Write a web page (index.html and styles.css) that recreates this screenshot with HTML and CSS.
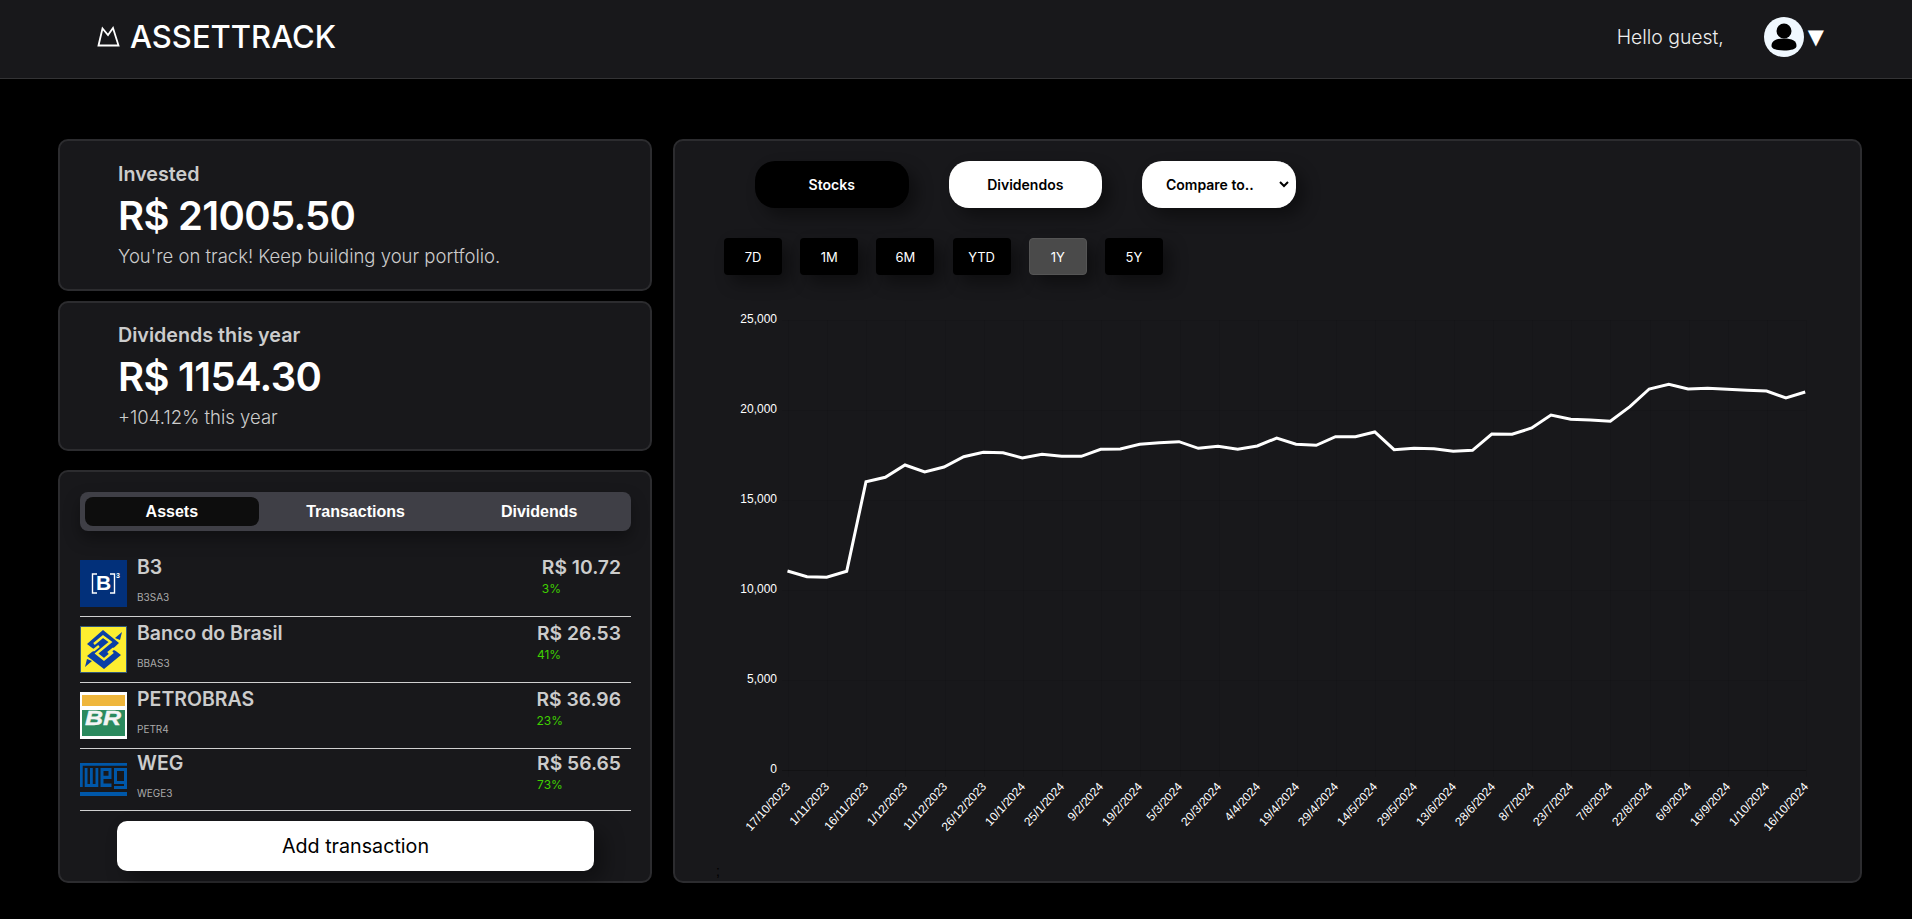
FILE: index.html
```html
<!DOCTYPE html>
<html lang="en">
<head>
<meta charset="utf-8">
<title>AssetTrack</title>
<link rel="stylesheet" href="styles.css">
</head>
<body>
<header class="topbar">
  <div class="brand">
    <svg class="brand-icon" width="23" height="21" viewBox="0 0 23 21"><path d="M1.5 19.5 L5.5 2.5 L11 9 L16 2 L21.5 19.5 Z" fill="none" stroke="#fff" stroke-width="1.8"/></svg>
    <span class="brand-name">ASSETTRACK</span>
  </div>
  <div class="user">
    <span class="hello">Hello guest,</span>
    <svg class="avatar" width="40" height="40" viewBox="0 0 40 40"><circle cx="20" cy="20" r="20" fill="#f0f8ff"/><circle cx="20" cy="14" r="7.5" fill="#000"/><path d="M7.5 29 C7.5 23.5 12 21.5 20 21.5 C28 21.5 32.5 23.5 32.5 29 C32.5 32 27 33.5 20 33.5 C13 33.5 7.5 32 7.5 29 Z" fill="#000"/></svg>
    <span class="caret">▼</span>
  </div>
</header>
<main class="layout">
  <div class="side">
    <section class="card stat stat-first">
      <h2 class="stat-label">Invested</h2>
      <div class="stat-value">R$ 21005.50</div>
      <p class="stat-note">You're on track! Keep building your portfolio.</p>
    </section>
    <section class="card stat stat-second">
      <h2 class="stat-label">Dividends this year</h2>
      <div class="stat-value">R$ 1154.30</div>
      <p class="stat-note">+104.12% this year</p>
    </section>
    <section class="card assets">
      <div class="tabs">
        <button class="tab tab-active">Assets</button>
        <button class="tab">Transactions</button>
        <button class="tab">Dividends</button>
      </div>
      <ul class="asset-list">
        <li class="asset">
          <svg class="logo" width="47" height="47" viewBox="0 0 47 47"><rect width="47" height="47" fill="#02307a"/><path d="M17 14 H12.5 V33 H17 M30 14 H34.5 V33 H30" fill="none" stroke="#fff" stroke-width="1.4"/><text x="23.5" y="30" class="logo-b3">B</text><text x="36" y="18" class="logo-b3-sup">3</text></svg>
          <div class="asset-info"><div class="asset-name">B3</div><div class="asset-ticker">B3SA3</div></div>
          <div class="asset-price"><div class="price">R$ 10.72</div><div class="pct">3%</div></div>
        </li>
        <li class="asset">
          <svg class="logo" width="47" height="47" viewBox="0 0 47 47"><rect x=".5" y=".5" width="46" height="46" fill="#fdee30" stroke="#33597a"/><path d="M23 4 L39 17 L24 31 L7 18 Z M24 16 L41 29 L24 43 L7 30 Z" fill="#0b3fa6"/><path d="M35 12 L42 6 L40 14 Z M12 35 L5 41 L7 33 Z" fill="#0b3fa6"/><path d="M5 24 H14 L19 20 M42 23 H33 L28 27 M14 18 L23 10.5 L30.5 16 L16.5 27.5 L24 33.5 L33 26" fill="none" stroke="#fdee30" stroke-width="2.4"/></svg>
          <div class="asset-info"><div class="asset-name">Banco do Brasil</div><div class="asset-ticker">BBAS3</div></div>
          <div class="asset-price"><div class="price">R$ 26.53</div><div class="pct">41%</div></div>
        </li>
        <li class="asset">
          <svg class="logo" width="47" height="47" viewBox="0 0 47 47"><rect width="47" height="47" fill="#fff"/><rect x="2" y="3" width="43" height="11" fill="#efb63c"/><rect x="2" y="18" width="43" height="26" fill="#2b8a5e"/><text x="23" y="33" class="logo-br" textLength="36" lengthAdjust="spacingAndGlyphs">BR</text></svg>
          <div class="asset-info"><div class="asset-name">PETROBRAS</div><div class="asset-ticker">PETR4</div></div>
          <div class="asset-price"><div class="price">R$ 36.96</div><div class="pct">23%</div></div>
        </li>
        <li class="asset">
          <svg class="logo" width="47" height="33" viewBox="0 0 47 33"><path fill-rule="evenodd" fill="#0057a8" d="M0 0 H47 V2.7 H2.7 V24 H0 Z M0 29 H47 V33 H0 Z M4.7 5 H7.5 V21 H10 V5 H12.8 V21 H15.5 V5 H18.3 V24 H4.7 Z M20.5 5 H31.5 V16 H23.5 V20.5 H31.5 V24 H20.5 Z M23.5 8 V12.8 H28.5 V8 Z M34 5 H47 V26 H34 V23 H44 V21 H34 Z M37 8 V18 H44 V8 Z"/></svg>
          <div class="asset-info"><div class="asset-name">WEG</div><div class="asset-ticker">WEGE3</div></div>
          <div class="asset-price"><div class="price">R$ 56.65</div><div class="pct">73%</div></div>
        </li>
      </ul>
      <button class="add-btn">Add transaction</button>
    </section>
  </div>
  <section class="card panel">
    <div class="panel-controls">
      <button class="pill pill-dark">Stocks</button>
      <button class="pill pill-light">Dividendos</button>
      <select class="pill pill-light pill-select"><option>Compare to..</option></select>
    </div>
    <div class="ranges">
      <button class="range">7D</button>
      <button class="range">1M</button>
      <button class="range">6M</button>
      <button class="range">YTD</button>
      <button class="range range-active">1Y</button>
      <button class="range">5Y</button>
    </div>
    <svg class="chart" width="1185" height="545" viewBox="675 300 1185 545">
      <g class="grid">
        <path d="M782 320.5H1806M782 410.5H1806M782 500.5H1806M782 590.5H1806M782 680.5H1806"/>
        <path d="M788.5 320V777M827.5 320V777M866.5 320V777M905.5 320V777M945.5 320V777M984.5 320V777M1023.5 320V777M1062.5 320V777M1101.5 320V777M1140.5 320V777M1180.5 320V777M1219.5 320V777M1258.5 320V777M1297.5 320V777M1336.5 320V777M1375.5 320V777M1415.5 320V777M1454.5 320V777M1493.5 320V777M1532.5 320V777M1571.5 320V777M1610.5 320V777M1650.5 320V777M1689.5 320V777M1728.5 320V777M1767.5 320V777M1806.5 320V777"/>
      </g>
      <path class="axis" d="M782 770.5H1806"/>
      <g class="y-labels">
        <text x="777" y="323">25,000</text>
        <text x="777" y="413">20,000</text>
        <text x="777" y="503">15,000</text>
        <text x="777" y="593">10,000</text>
        <text x="777" y="683">5,000</text>
        <text x="777" y="773">0</text>
      </g>
      <polyline class="line" points="787.5,571 807,576.7 826.7,577.3 846.7,571.3 866,481.7 885.3,477.3 905,465 924.7,472 944,467 963.7,456.7 983.3,452.3 1003,452.7 1022.3,458 1042,454.3 1061.7,456.3 1081.3,456.3 1100.7,449.3 1120.3,449 1139.7,444.3 1159.3,442.7 1179,441.7 1198.3,448.3 1218,446.3 1237.7,449.3 1257.3,446 1276.7,438 1296,444.3 1316.2,445.3 1335.5,436.7 1355.4,436.7 1374.8,432 1394.1,449.7 1414,448.3 1434,448.7 1453.2,451.3 1472.5,450.3 1491.8,434 1512.1,434.3 1531.7,428 1551,415 1570.7,419.3 1590.3,420 1610.3,421.3 1629.9,406.7 1649.2,389 1668.8,384.3 1688.1,389 1707.7,388.3 1727.4,389.3 1747,390.3 1766.6,391 1785.9,398 1805.2,392"/>
      <g class="x-labels">
        <text transform="translate(791 787) rotate(-48)">17/10/2023</text>
        <text transform="translate(830 787) rotate(-48)">1/11/2023</text>
        <text transform="translate(869 787) rotate(-48)">16/11/2023</text>
        <text transform="translate(908 787) rotate(-48)">1/12/2023</text>
        <text transform="translate(948 787) rotate(-48)">11/12/2023</text>
        <text transform="translate(987 787) rotate(-48)">26/12/2023</text>
        <text transform="translate(1026 787) rotate(-48)">10/1/2024</text>
        <text transform="translate(1065 787) rotate(-48)">25/1/2024</text>
        <text transform="translate(1104 787) rotate(-48)">9/2/2024</text>
        <text transform="translate(1143 787) rotate(-48)">19/2/2024</text>
        <text transform="translate(1183 787) rotate(-48)">5/3/2024</text>
        <text transform="translate(1222 787) rotate(-48)">20/3/2024</text>
        <text transform="translate(1261 787) rotate(-48)">4/4/2024</text>
        <text transform="translate(1300 787) rotate(-48)">19/4/2024</text>
        <text transform="translate(1339 787) rotate(-48)">29/4/2024</text>
        <text transform="translate(1378 787) rotate(-48)">14/5/2024</text>
        <text transform="translate(1418 787) rotate(-48)">29/5/2024</text>
        <text transform="translate(1457 787) rotate(-48)">13/6/2024</text>
        <text transform="translate(1496 787) rotate(-48)">28/6/2024</text>
        <text transform="translate(1535 787) rotate(-48)">8/7/2024</text>
        <text transform="translate(1574 787) rotate(-48)">23/7/2024</text>
        <text transform="translate(1613 787) rotate(-48)">7/8/2024</text>
        <text transform="translate(1653 787) rotate(-48)">22/8/2024</text>
        <text transform="translate(1692 787) rotate(-48)">6/9/2024</text>
        <text transform="translate(1731 787) rotate(-48)">16/9/2024</text>
        <text transform="translate(1770 787) rotate(-48)">1/10/2024</text>
        <text transform="translate(1809 787) rotate(-48)">16/10/2024</text>
      </g>
    </svg>
    <span class="stray">;</span>
  </section>
</main>
</body>
</html>
```
FILE: styles.css
```css
* { box-sizing: border-box; }
html, body { margin: 0; height: 100%; }
body { background: #000; color: #fff; font-family: Inter, "Noto Sans", sans-serif; overflow: hidden; }
h2, p, ul { margin: 0; padding: 0; }
button, select { font-family: inherit; border: 0; }

.topbar { height: 79px; background: #18181b; border-bottom: 1px solid #333335; display: flex; align-items: center; justify-content: space-between; padding: 0 88px 5px 97px; }
.brand { display: flex; align-items: center; gap: 10px; }
.brand-icon { display: block; }
.brand-name { font-size: 31px; font-weight: 500; }
.user { display: flex; align-items: center; }
.hello { font-size: 19.4px; font-weight: 300; color: #eee; margin-right: 40px; }
.avatar { display: block; margin-right: 4px; }
.caret { font-family: "DejaVu Sans", sans-serif; font-size: 21px; line-height: 40px; }

.layout { display: grid; grid-template-columns: 594px 1189px; column-gap: 21px; padding: 60px 50px 0 58px; }
.side { display: flex; flex-direction: column; }
.card { background: #18181b; border: 2px solid #2c2c2f; border-radius: 10px; }

.stat { padding: 21px 58px 0; }
.stat-first { height: 152px; margin-bottom: 10px; }
.stat-second { height: 150px; margin-bottom: 19px; padding-top: 20px; }
.stat-label { font-size: 19.7px; font-weight: 600; color: #ccc; line-height: 24px; }
.stat-value { font-size: 40px; font-weight: 600; letter-spacing: -0.7px; line-height: 48px; margin-top: 6px; }
.stat-note { font-size: 18.5px; font-weight: 300; color: #ccc; line-height: 24px; margin-top: 4px; }

.assets { height: 413px; padding: 20px 19px 0 20px; display: flex; flex-direction: column; }
.tabs { height: 39px; background: #3f3f46; border-radius: 8px; display: grid; grid-template-columns: repeat(3, 1fr); box-shadow: 0 8px 16px rgba(0,0,0,.35); flex: none; }
.tab { margin: 5px; background: transparent; color: #fff; font-family: "Liberation Sans", Arial, sans-serif; font-weight: 700; font-size: 16px; border-radius: 8px; padding: 0; }
.tab-active { background: #0d0d0d; }

.asset-list { list-style: none; margin-top: 20px; }
.asset { display: flex; align-items: center; border-bottom: 1px solid #d0d0d0; padding-right: 10px; }
.logo { display: block; flex: none; margin: 9px 0; }
.asset-info { margin-left: 10px; flex: 1; height: 61px; padding-top: 1px; }
.asset-name { font-size: 19.5px; font-weight: 600; color: #ccc; line-height: 27px; }
.asset-ticker { font-size: 10px; color: #aaa; line-height: 12px; margin-top: 10px; }
.asset-price { height: 61px; padding-top: 1px; }
.price { font-size: 19.3px; font-weight: 600; color: #ccc; line-height: 27px; }
.pct { font-size: 12px; color: #3fd000; line-height: 16px; }

.add-btn { flex: none; align-self: center; width: 477px; height: 50px; margin-top: 10px; background: #fff; color: #000; font-size: 19.7px; font-weight: 400; border-radius: 10px; box-shadow: 10px 10px 20px rgba(0,0,0,.35); }

.panel { height: 744px; position: relative; padding: 20px 0 0; overflow: hidden; }
.panel-controls { display: flex; gap: 40px; margin-left: 80px; }
.pill { width: 153.5px; height: 47px; border-radius: 20px; font-size: 14px; font-weight: 600; box-shadow: 8px 8px 16px rgba(0,0,0,.4); }
.pill-dark { background: #000; color: #fff; }
.pill-light { background: #fff; color: #000; }
.pill-select { padding: 0 0 0 20px; border-right: 4px solid #fff; }
.ranges { display: flex; gap: 18.2px; margin: 30px 0 0 49px; }
.range { width: 58px; height: 37px; background: #000; color: #fff; font-size: 13px; border-radius: 4px; padding: 0; box-shadow: 8px 8px 16px rgba(0,0,0,.4); }
.range-active { background: #4a4a4a; border: 1px solid #555; }

.chart { display: block; margin-top: 25px; }
.grid path { fill: none; stroke: rgba(0,0,0,.07); stroke-width: 1; }
.axis { fill: none; stroke: rgba(0,0,0,.25); stroke-width: 1; }
.y-labels text { font-family: "Liberation Sans", Arial, sans-serif; font-size: 12px; fill: #fff; text-anchor: end; }
.x-labels text { font-family: "Liberation Sans", Arial, sans-serif; font-size: 12px; fill: #fff; text-anchor: end; }
.line { fill: none; stroke: #fff; stroke-width: 3; }
.stray { position: absolute; left: 41px; bottom: 2px; color: #000; font-family: "Liberation Sans", sans-serif; font-size: 14px; line-height: 16px; }

.logo-b3 { font-family: "Liberation Sans", sans-serif; font-weight: 700; font-size: 21px; fill: #fff; text-anchor: middle; }
.logo-b3-sup { font-family: "Liberation Sans", sans-serif; font-weight: 700; font-size: 7px; fill: #fff; }
.logo-br { font-family: "Liberation Sans", sans-serif; font-weight: 700; font-style: italic; font-size: 20px; fill: #f4f4f4; stroke: #f4f4f4; stroke-width: .4; text-anchor: middle; }
```
